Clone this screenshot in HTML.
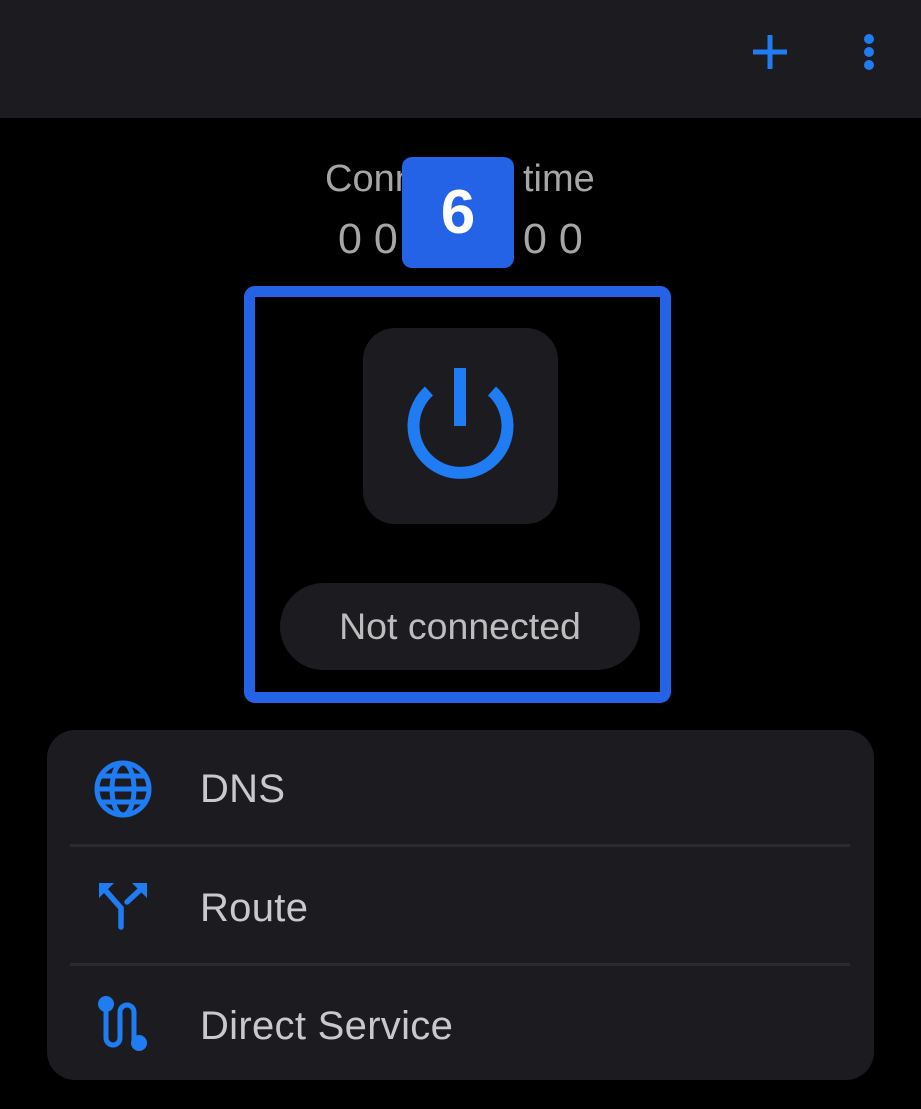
<!DOCTYPE html>
<html><head><meta charset="utf-8"><style>
*{margin:0;padding:0;box-sizing:border-box}
body{width:921px;height:1109px;background:#000;font-family:"Liberation Sans",sans-serif;position:relative;overflow:hidden}
.hdr{position:absolute;left:0;top:0;width:921px;height:118px;background:#1c1b1f}
.abs{position:absolute}
.t{color:#a6a6a6;font-size:38px}
.card{position:absolute;left:47px;top:730px;width:827px;height:350px;background:#1c1b1f;border-radius:28px}
.row{position:absolute;left:153px;color:#c9c9cc;font-size:40px;letter-spacing:0.3px}
.div{position:absolute;left:23px;width:780px;height:3px;background:#2b2a2f}
</style></head><body>
<div class="hdr">
<svg class="abs" style="left:740px;top:20px" width="160" height="70">
<path d="M30 32H47M30 32H13M30 32V15M30 32V49" stroke="#1f7cf2" stroke-width="5" fill="none"/>
<circle cx="129" cy="19" r="5" fill="#1f7cf2"/><circle cx="129" cy="32" r="5" fill="#1f7cf2"/><circle cx="129" cy="45" r="5" fill="#1f7cf2"/>
</svg>
</div>
<div class="abs t" style="left:325px;top:158px">Conn</div>
<div class="abs t" style="left:523px;top:158px">time</div>
<div class="abs t" style="left:338px;top:215px;font-size:43px">0 0</div>
<div class="abs t" style="left:523px;top:215px;font-size:43px">0 0</div>
<div class="abs" style="left:402px;top:157px;width:112px;height:111px;background:#2563e6;border-radius:10px;color:#fff;font-weight:bold;font-size:62px;text-align:center;line-height:111px">6</div>
<div class="abs" style="left:244px;top:286px;width:427px;height:417px;border:11px solid #2563e6;border-radius:11px"></div>
<div class="abs" style="left:363px;top:328px;width:195px;height:196px;background:#1c1b1f;border-radius:32px"></div>
<svg class="abs" style="left:363px;top:328px" width="195" height="196">
<path d="M66 63A47 47 0 1 0 129 63" stroke="#1f7cf2" stroke-width="12" fill="none"/>
<path d="M97 40V98" stroke="#1f7cf2" stroke-width="12"/>
</svg>
<div class="abs" style="left:280px;top:583px;width:360px;height:87px;background:#1c1b1f;border-radius:44px;color:#bdbdbd;font-size:37.5px;text-align:center;line-height:87px">Not connected</div>
<div class="card">
<svg class="abs" style="left:45px;top:28px" width="62" height="62">
<g stroke="#1f7cf2" stroke-width="5" fill="none"><circle cx="31" cy="31" r="26"/><ellipse cx="31" cy="31" rx="11" ry="26"/><path d="M5 31H57M9 18H53M9 44H53"/></g></svg>
<div class="row" style="top:37px">DNS</div>
<div class="div" style="top:114px"></div>
<svg class="abs" style="left:45px;top:145px" width="62" height="62">
<g stroke="#1f7cf2" stroke-width="5.5" fill="none" stroke-linecap="round"><path d="M29 52V33L14 16M35 27L48 15"/></g>
<path d="M7 8H22L7 23Z M55 8V23L40 8Z" fill="#1f7cf2"/></svg>
<div class="row" style="top:156px">Route</div>
<div class="div" style="top:233px"></div>
<svg class="abs" style="left:45px;top:264px" width="62" height="62">
<g stroke="#1f7cf2" stroke-width="5" fill="none"><path d="M14 10V44A7 7 0 0 0 28 44V18A7 7 0 0 1 42 18V46"/></g>
<circle cx="14" cy="10" r="8" fill="#1f7cf2"/><circle cx="47" cy="49" r="8" fill="#1f7cf2"/></svg>
<div class="row" style="top:274px">Direct Service</div>
</div>
</body></html>
